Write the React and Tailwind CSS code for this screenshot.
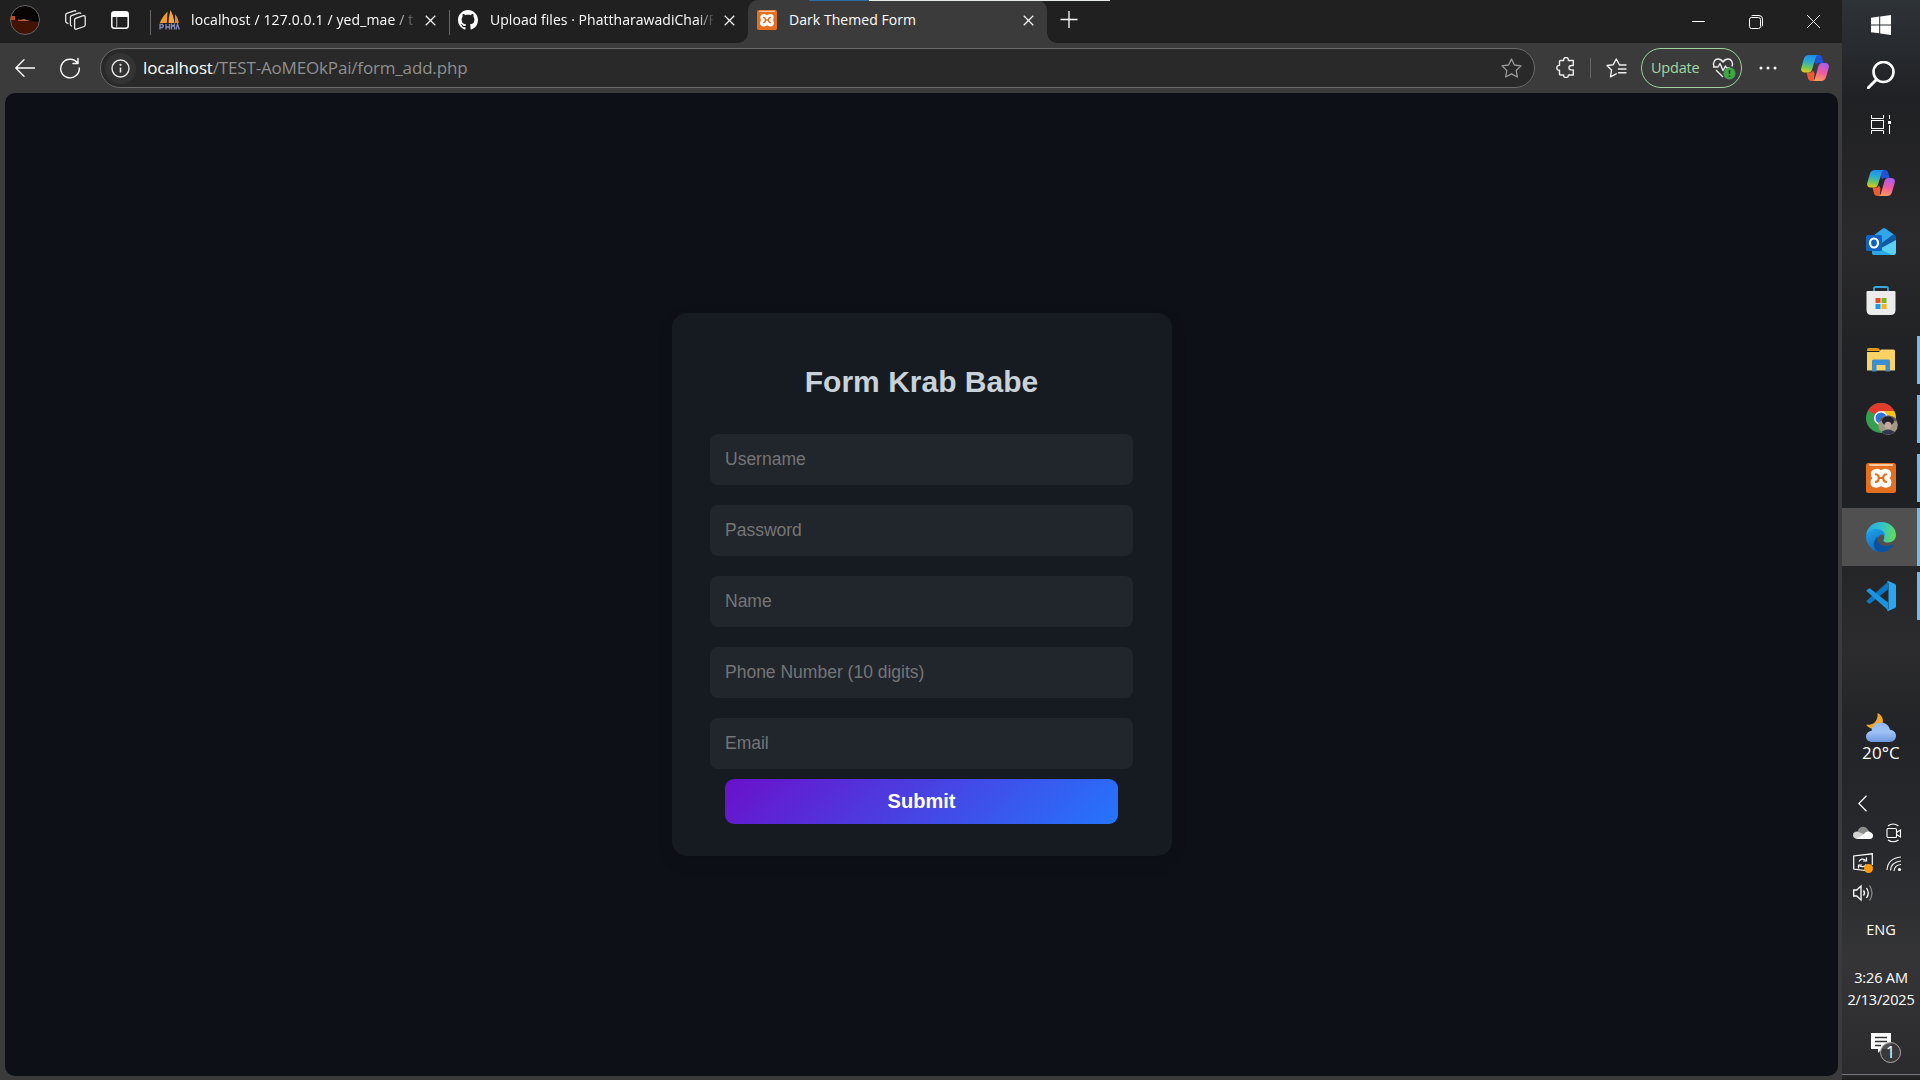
import React from "react";

const UI = "font-['Open_Sans',sans-serif]";

function Copilot({ id, className }) {
  return (
    <svg className={className} viewBox="0 0 28 26" fill="none">
      <defs>
        <linearGradient id={id + "a"} x1="8" y1="0" x2="5" y2="18" gradientUnits="userSpaceOnUse">
          <stop offset="0" stopColor="#1f8df0" />
          <stop offset=".4" stopColor="#2db0c8" />
          <stop offset=".72" stopColor="#7cc850" />
          <stop offset="1" stopColor="#f2c81c" />
        </linearGradient>
        <linearGradient id={id + "b"} x1="22" y1="8" x2="17" y2="26" gradientUnits="userSpaceOnUse">
          <stop offset="0" stopColor="#a95cf0" />
          <stop offset=".5" stopColor="#ee5aa0" />
          <stop offset="1" stopColor="#fb9a5c" />
        </linearGradient>
      </defs>
      <path d="M14 0h4.300c1.500 0 2.300 1 2.700 2.300L22.500 8h-4c-2 0-2.600.5-3.200 1.500L13.500 7z" fill="#2152d4" />
      <path d="M5.500 17.500H9c1.600 0 2.500-.8 3-2.300l1.500 3.300-.5 5.500 1 2h-3.500c-2 0-3-1-3.500-2.700z" fill="#ee5a34" />
      <path d="M8 0h9.500c-1.600 0-2.400 1.200-2.900 2.800L11.200 14c-.7 2.400-1.700 3.500-4 3.500H3.600C.8 17.500-.4 15.600.3 12.800L3 3.500C3.700 1.200 5.300 0 8 0z" fill={"url(#" + id + "a)"} />
      <path d="M20 26h-8.500c1.400 0 2-1.100 2.500-2.800L17.300 11.800c.7-2.300 1.700-3.800 4-3.800h3.100c2.800 0 4 2 3.300 4.700L25 22.300C24.300 24.700 22.700 26 20 26z" fill={"url(#" + id + "b)"} />
    </svg>
  );
}

function Xampp({ className }) {
  return (
    <svg className={className} viewBox="0 0 30 30" fill="none">
      <rect width="30" height="30" rx="2.500" fill="#e4701f" />
      <rect x="3" y="1" width="24" height="2" rx="1" fill="#f9c9a2" />
      <path d="M15 10.300C13.200 6.300 6.600 6.800 6.600 11c0 2 .8 3.200 1.800 4.300-1.100 1-2.100 2.200-2.100 4.200 0 4.500 6.900 4.500 8.700.6 1.800 3.900 8.700 3.900 8.700-.6 0-2-1-3.200-2.100-4.200 1-1.100 1.800-2.300 1.800-4.300 0-4.200-6.600-4.700-8.400-.7z" fill="#fff" stroke="#fff" strokeWidth="3.400" strokeLinejoin="round" />
      <path d="M9.800 11.300q3 .3 3 3.700 0 3.400-3 3.900M20.200 11.300q-3 .3-3 3.700 0 3.400 3 3.900M12.800 15h4.400" stroke="#e4701f" strokeWidth="2.100" strokeLinecap="round" />
    </svg>
  );
}

function Close({ className }) {
  return (
    <svg className={className} viewBox="0 0 12 12" stroke="#fff" strokeWidth="1.300" fill="none">
      <path d="M.8.8l10.400 10.400M11.200.8L.8 11.200" />
    </svg>
  );
}

function TabStrip() {
  return (
    <div className={"flex h-[43px] w-full bg-[#202020] text-white " + UI}>
      <svg className="ml-2.5 mt-[5px] h-[30px] w-[30px] shrink-0" viewBox="0 0 30 30">
        <defs>
          <clipPath id="avatar"><circle cx="15" cy="15" r="14.500" /></clipPath>
        </defs>
        <g clipPath="url(#avatar)">
          <rect width="30" height="30" fill="#080404" />
          <path d="M0 11h5v4l12 1 13 1v13H0z" fill="#421304" />
          <path d="M0 11h5v4H0zM8 14.500l12 1.500H8z" fill="#c44a10" />
          <path d="M9 15.500l5-1.500 6 2z" fill="#b07050" />
        </g>
        <circle cx="15" cy="15" r="14.500" fill="none" stroke="#666" />
      </svg>
      <svg className="ml-[25px] mt-2.5 h-[21px] w-[21px] shrink-0" viewBox="0 0 21 21" fill="none" stroke="#e8e8e8" strokeWidth="1.300">
        <path d="M10.500 8.300l7.800-2.600c1-.3 1.900.3 1.900 1.300v8c0 .8-.4 1.300-1.100 1.500l-7.700 2.700c-1 .3-1.800-.3-1.800-1.300v-8c0-.8.300-1.300.9-1.600z" />
        <path d="M6.800 16.200l-.7-.5c-.5-.3-.7-.7-.7-1.300V7.200c0-.8.400-1.300 1.100-1.600l7.700-2.700c.8-.2 1.400 0 1.800.8" />
        <path d="M3.300 13.800l-1.800-1.200c-.5-.3-.8-.8-.8-1.400V5c0-.8.400-1.300 1.100-1.600L9.300.8c.8-.2 1.400 0 1.800.7" />
      </svg>
      <svg className="ml-[25px] mt-[11px] h-[18px] w-[18px] shrink-0" viewBox="0 0 18 18" fill="none">
        <rect x=".8" y=".8" width="16.400" height="16.400" rx="2.500" stroke="#fff" strokeWidth="1.500" />
        <path d="M1 3q0-2 2-2h12q2 0 2 2v3H1z" fill="#fff" />
        <path d="M5.700 6v11" stroke="#aaa" strokeWidth="1.200" />
      </svg>
      <div className="ml-[21px] mt-2.5 h-[25px] w-px shrink-0 bg-[#686868]" />
      <div className="flex w-[299px] shrink-0">
        <svg className="ml-2 mt-2.5 h-[21px] w-[21px] shrink-0" viewBox="0 0 21 21" fill="none">
          <path d="M8.500 1.500Q2.500 8 .8 13h7z" fill="#f29a2e" />
          <path d="M11.500 0q-2 7-2 13h6q-.5-7-4-13z" fill="#f8a63a" />
          <path d="M16 4q0 5 0 9h4q-.5-5-4-9z" fill="#d58b3d" />
          <path d="M1 19.500V14.500h2.500q1.500 1.500 0 3H1M7 14v5.500M7 17h3.500M10.500 14v5.500M12.500 19.500v-5l1.500 2 1.500-2v5M17 19.500l1.500-5.500 1.800 5.500" stroke="#8486b8" strokeWidth="1.300" />
        </svg>
        <div className="ml-[11px] mt-2.5 h-5 w-[224px] whitespace-nowrap text-[14px] leading-5 tracking-[0.120px] [mask-image:linear-gradient(90deg,#000_90%,rgba(0,0,0,0.1)_100%)]">localhost / 127.0.0.1 / yed_mae / t</div>
        <Close className="ml-2.5 mt-[15px] h-[11px] w-[11px] shrink-0" />
      </div>
      <div className="-ml-px mt-2.5 h-[25px] w-px shrink-0 bg-[#686868]" />
      <div className="flex w-[298px] shrink-0">
        <svg className="ml-2 mt-2.5 h-5 w-5 shrink-0" viewBox="0 0 16 16" fill="#fff">
          <path d="M8 0C3.580 0 0 3.580 0 8c0 3.540 2.290 6.530 5.470 7.590.4.070.55-.17.55-.38 0-.19-.01-.82-.01-1.490-2.010.37-2.530-.49-2.690-.94-.09-.23-.48-.94-.82-1.130-.28-.15-.68-.52-.01-.53.63-.01 1.080.58 1.230.82.72 1.210 1.870.87 2.330.66.070-.52.28-.87.51-1.070-1.780-.2-3.640-.89-3.640-3.950 0-.87.31-1.590.82-2.150-.08-.2-.36-1.020.08-2.120 0 0 .67-.21 2.200.82.64-.18 1.320-.27 2-.27s1.360.09 2 .27c1.530-1.040 2.200-.82 2.200-.82.44 1.100.16 1.920.08 2.120.51.56.82 1.270.82 2.150 0 3.070-1.870 3.750-3.650 3.950.29.25.54.73.54 1.480 0 1.070-.01 1.930-.01 2.200 0 .21.15.46.55.38A8.010 8.010 0 0016 8c0-4.420-3.580-8-8-8z" />
        </svg>
        <div className="ml-3 mt-2.5 h-5 w-[223px] whitespace-nowrap text-[14px] leading-5 tracking-[0.040px] [mask-image:linear-gradient(90deg,#000_93%,rgba(0,0,0,0.1)_100%)]">Upload files · PhattharawadiChai/F</div>
        <Close className="ml-[11px] mt-[15px] h-[11px] w-[11px] shrink-0" />
      </div>
      <div className="relative flex w-[299px] shrink-0 rounded-t-[10px] bg-[#3b3b3b]">
        <div className="absolute -left-2.5 bottom-0 h-2.5 w-2.5 bg-[radial-gradient(circle_at_0_0,#202020_9.500px,#3b3b3b_10px)]" />
        <div className="absolute -right-2.5 bottom-0 h-2.5 w-2.5 bg-[radial-gradient(circle_at_100%_0,#202020_9.500px,#3b3b3b_10px)]" />
        <div className="absolute left-[61px] top-0 flex h-px w-[301px]">
          <div className="w-[60px] bg-[#2c6ba3]" />
          <div className="flex-1 bg-[#e6ebe8]" />
        </div>
        <Xampp className="ml-[9px] mt-2.5 h-5 w-5 shrink-0" />
        <div className="ml-3 mt-2.5 h-5 w-[223px] whitespace-nowrap text-[14px] leading-5 tracking-[0.060px]">Dark Themed Form</div>
        <Close className="ml-[11px] mt-[15px] h-[11px] w-[11px] shrink-0" />
      </div>
      <svg className="ml-[13px] mt-[11px] h-[18px] w-[18px] shrink-0" viewBox="0 0 18 18" stroke="#fff" strokeWidth="1.300">
        <path d="M.5 8.500h17M9 0v17" />
      </svg>
      <div className="ml-auto flex">
        <svg className="mr-11 mt-[15px] h-[13px] w-[13px]" viewBox="0 0 13 13" stroke="#fff"><path d="M0 6.500h13" /></svg>
        <svg className="mr-[44px] mt-[15px] h-[14px] w-[14px]" viewBox="0 0 14 14" fill="none" stroke="#fff">
          <rect x=".5" y="2.500" width="11" height="11" rx="2" />
          <path d="M2.500.9Q3 .5 4 .5h6q3.500 0 3.500 3.500v6q0 1-.6 1.500" />
        </svg>
        <svg className="mr-[22px] mt-[15px] h-[13px] w-[13px]" viewBox="0 0 13 13" stroke="#fff"><path d="M0 0l13 13M13 0L0 13" /></svg>
      </div>
    </div>
  );
}

function Toolbar() {
  return (
    <div className={"flex h-[50px] w-full bg-[#3b3b3b] " + UI}>
      <svg className="ml-[15px] mt-4 h-[18px] w-5 shrink-0" viewBox="0 0 20 18" fill="none" stroke="#fff" strokeWidth="1.300" strokeLinecap="round" strokeLinejoin="round">
        <path d="M9 .7L.8 9 9 17.300M1 9h18.500" />
      </svg>
      <svg className="ml-6 mt-[14px] h-[22px] w-[22px] shrink-0" viewBox="0 0 22 22" fill="none" stroke="#fff" strokeWidth="1.400" strokeLinecap="round" strokeLinejoin="round">
        <path d="M18.500 6A9.300 9.300 0 1 0 20.300 11M19 1.500v5h-5" />
      </svg>
      <div className="ml-[19px] mt-[5px] flex h-10 w-[1435px] shrink-0 items-center rounded-full border border-[#6b6b6b] bg-[#292929]">
        <div className="ml-1 flex h-[31px] w-[31px] items-center justify-center rounded-full bg-[#333]">
          <svg className="h-[19px] w-[19px]" viewBox="0 0 19 19" fill="none" stroke="#e8e8e8" strokeWidth="1.400">
            <circle cx="9.500" cy="9.500" r="8.500" />
            <path d="M9.500 8.500v5" strokeWidth="1.600" />
            <circle cx="9.500" cy="5.800" r=".5" strokeWidth="1.200" />
          </svg>
        </div>
        <div className="ml-[7px] whitespace-nowrap text-[17px] leading-[22px] tracking-[-0.165px] text-[#8f8f8f]"><span className="text-white">localhost</span>/TEST-AoMEOkPai/form_add.php</div>
        <svg className="ml-auto mr-3 h-[21px] w-[21px]" viewBox="0 0 21 21" fill="none" stroke="#9a9a9a" strokeWidth="1.300" strokeLinejoin="round">
          <path d="M10.500 1l2.900 6 6.600.9-4.800 4.600 1.200 6.500-5.900-3.100L4.600 19l1.200-6.500L1 7.900 7.600 7z" />
        </svg>
      </div>
      <svg className="ml-[21px] mt-[14px] h-[21px] w-[20px] shrink-0" viewBox="0 0 20 21" fill="none" stroke="#eee" strokeWidth="1.400" strokeLinejoin="round">
        <path d="M4.500 3.500h3.200c-.3-2 .8-3 2.300-3s2.600 1 2.300 3h5v5h-1.800c-1.800 0-2.500 1-2.500 2.200s.8 2.200 2.500 2.200h1.800V18h-5c.3 1.700-.8 2.500-2.300 2.500S7.400 19.700 7.700 18H4.500q-1 0-1-1v-3.800C1.800 13.400.8 12.300.8 10.800s1-2.600 2.700-2.400V4.500q0-1 1-1z" />
      </svg>
      <div className="ml-[14px] mt-[15px] h-5 w-px shrink-0 bg-[#666]" />
      <svg className="ml-[15px] mt-[15px] h-5 w-[21px] shrink-0" viewBox="0 0 21 20" fill="none" stroke="#eee" strokeWidth="1.400" strokeLinejoin="round" strokeLinecap="round">
        <path d="M20 7h-6.500L10.300 1 7.200 6.700 1 7.500l4.500 4.600-1 6.700 5.700-3M12.500 11H20M12.500 14.800H20" />
      </svg>
      <div className="ml-[14px] mt-[5px] flex h-10 w-[101px] shrink-0 items-center rounded-full border border-[#9cd49c] text-[#a3d9a1]">
        <span className="ml-[9px] w-[51px] whitespace-nowrap text-[14.500px] tracking-[-0.200px]">Update</span>
        <svg className="ml-[10px] mt-0.5 h-[22px] w-[24px]" viewBox="0 0 24 22" fill="none">
          <path d="M2 8.500C.5 4 3 1 6 1c2 0 3.600 1 5 3 1.400-2 3-3 5-3 3 0 5.500 3 4 7.500M4 12l7 7M1 9h5l2-3.500 3 7L13.500 8l1 2H18" stroke="#eee" strokeWidth="1.400" strokeLinejoin="round" />
          <circle cx="17.500" cy="15.500" r="6" fill="#3fa648" />
          <path d="M17.500 12v4M17.500 17.500v1.500" stroke="#173d1a" strokeWidth="1.500" />
        </svg>
      </div>
      <svg className="ml-[17px] mt-[23px] h-1 w-[18px] shrink-0" viewBox="0 0 18 4" fill="#fff">
        <circle cx="2" cy="2" r="1.500" /><circle cx="9" cy="2" r="1.500" /><circle cx="16" cy="2" r="1.500" />
      </svg>
      <Copilot id="cpA" className="ml-6 mt-3 h-[26px] w-7 shrink-0" />
    </div>
  );
}

const FIELDS = ["Username", "Password", "Name", "Phone Number (10 digits)", "Email"];

function FormCard() {
  return (
    <form className="flex h-[543px] w-[500px] flex-col rounded-[15px] bg-[#161b22] px-[38px] font-['Liberation_Sans',Arial,sans-serif] shadow-[0_6px_16px_rgba(0,0,0,0.12)]">
      <h2 className="mt-[50.500px] text-center text-[30px] font-bold leading-[36px] text-[#c9d1d9]">Form Krab Babe</h2>
      <div className="mt-[34.500px] flex flex-col gap-5">
        {FIELDS.map((f) => (
          <input key={f} placeholder={f} className="h-[51px] w-[423px] rounded-lg bg-[#21262d] px-[15.500px] text-[17.500px] text-white placeholder:text-[#757575]" />
        ))}
      </div>
      <button type="button" className="ml-[15px] mt-2.5 h-[45px] w-[393px] rounded-[9px] bg-[linear-gradient(135deg,#6a11cb,#2575fc)] pb-0.5 pl-px text-[20px] font-bold leading-none text-white">Submit</button>
    </form>
  );
}

function Slot({ children, running, active }) {
  return (
    <div className={"flex w-full shrink-0 items-center " + (active ? "mt-px h-[58px] bg-[#505051]" : "h-[59px]")}>
      <div className="flex w-[75px] justify-center pl-[3px]">{children}</div>
      {running && <div className={"w-[3px] bg-[#76b9ed] " + (active ? "h-[58px]" : "h-12")} />}
    </div>
  );
}

function Taskbar() {
  return (
    <div className={"flex h-[1080px] w-[78px] shrink-0 flex-col bg-[linear-gradient(180deg,#2e3338_0px,#202124_100px,#242426_160px,#2a2a2c_240px,#202124_360px,#1f2023_500px,#2c2c2e_650px,#232427_730px,#27292c_850px,#353537_960px,#2b2b2d_1074px,#1f1f20_1080px)] text-white " + UI}>
      <svg className="ml-[29px] mt-[15px] h-5 w-5 shrink-0" viewBox="0 0 20 20" fill="#fff">
        <path d="M0 2.700L8.200 1.600V9.400H0zM9.200 1.400L20 0v9.400H9.200zM0 10.400h8.200v7.900L0 17.200zM9.200 10.400H20V20L9.200 18.500z" />
      </svg>
      <svg className="ml-[25px] mt-[26px] h-7 w-7 shrink-0" viewBox="0 0 28 28" fill="none" stroke="#fff">
        <circle cx="16.500" cy="11" r="10" strokeWidth="2.600" />
        <path d="M9.500 18.500L1.300 26.700" strokeWidth="3" strokeLinecap="round" />
      </svg>
      <svg className="ml-[29px] mt-[26px] h-[19px] w-5 shrink-0" viewBox="0 0 20 19" fill="none" stroke="#fff">
        <path d="M.5 0v3.500h12V0M.5 19v-3.500h12V19M18.500 0v4M18.500 10v9" />
        <rect x=".5" y="5.500" width="12" height="8" />
        <rect x="17" y="6" width="3" height="3" fill="#fff" stroke="none" />
      </svg>
      <div className="mt-[19px] flex flex-col">
        <Slot><Copilot id="cpB" className="h-[26px] w-7" /></Slot>
        <Slot>
          <svg className="h-[28px] w-[30px]" viewBox="0 0 30 28" fill="none">
            <path d="M6 9L16.500.8q1.500-1 3 0L28.500 7q1.500 1 1.500 2.500V24q0 3-3 3H9q-3 0-3-3z" fill="#1479c9" />
            <path d="M6 9L16.500.8q1.500-1 3 0L28 6.700 12 18H6z" fill="#2fa5ec" />
            <path d="M14 16.500L27.500 6.300Q30 8 30 10v4L14 23z" fill="#0c59a4" />
            <path d="M30 12v12q0 3-3 3H9q-2.500 0-3-2z" fill="#5ccff5" />
            <path d="M6 17l20 10H9q-3 0-3-3z" fill="#2aa7e6" />
            <rect y="7" width="16" height="16" rx="1.500" fill="#0f62bd" />
            <ellipse cx="8" cy="15" rx="4" ry="4.500" stroke="#fff" strokeWidth="2.200" />
          </svg>
        </Slot>
        <Slot>
          <svg className="mt-px h-[30px] w-[30px]" viewBox="0 0 30 30" fill="none">
            <path d="M8 6V2.500Q8 1 9.500 1h11Q22 1 22 2.500V6" stroke="#36a9de" strokeWidth="1.800" />
            <path d="M.5 6q0-1 1-1h27q1 0 1 1v18q0 5-5 5h-19q-5 0-5-5z" fill="#ececec" />
            <path d="M9.500 12h5v5h-5z" fill="#e34f24" /><path d="M15.500 12h5v5h-5z" fill="#7ab51d" />
            <path d="M9.500 18h5v5h-5z" fill="#1a9be0" /><path d="M15.500 18h5v5h-5z" fill="#f9b515" />
          </svg>
        </Slot>
        <Slot running>
          <svg className="h-6 w-7" viewBox="0 0 28 24" fill="none">
            <path d="M0 2Q0 0 1.500 0h9q1 0 1.600.8L13.500 3H0z" fill="#dd9a10" />
            <path d="M0 4h12l2-2.500h12.500Q28 1.500 28 3v19.500H0z" fill="#fbd264" />
            <path d="M5 23.500V13q0-1.500 1.500-1.500h15q1.500 0 1.500 1.500v10.500h-4.500V17h-9v6.500z" fill="#3c8dd0" />
          </svg>
        </Slot>
        <Slot running>
          <svg className="-mr-0.5 mt-px h-8 w-8" viewBox="0 0 32 32" fill="none">
            <circle cx="15" cy="15" r="15" fill="#34a04f" />
            <path d="M15 15L2 7.500A15 15 0 0 1 28 7.500z" fill="#e33b2e" />
            <path d="M15 8H28.300A15 15 0 0 1 15 30l6.500-11.500z" fill="#fbc21a" />
            <circle cx="15" cy="15" r="7" fill="#fff" />
            <circle cx="15" cy="15" r="5.500" fill="#2e73e0" />
            <circle cx="22" cy="22" r="9.800" fill="#a09a84" />
            <path d="M12.500 19q9-4 19 0l-2-4q-7-5-14.500 0z" fill="#5d5b56" />
            <ellipse cx="22" cy="18" rx="6" ry="4.500" fill="#23222c" />
            <ellipse cx="22" cy="22.500" rx="3.500" ry="3.800" fill="#c1aa9b" />
            <path d="M15 29q7-5 14 0-7 5-14 0z" fill="#34374d" />
          </svg>
        </Slot>
        <Slot running><Xampp className="h-[30px] w-[30px]" /></Slot>
        <Slot running active>
          <svg className="h-[30px] w-[30px]" viewBox="0 0 30 30" fill="none">
            <defs>
              <linearGradient id="edgeTop" x1="2" y1="8" x2="30" y2="14" gradientUnits="userSpaceOnUse">
                <stop offset="0" stopColor="#2aa8e4" /><stop offset=".5" stopColor="#35c7c4" /><stop offset="1" stopColor="#66dc50" />
              </linearGradient>
              <linearGradient id="edgeLeft" x1="4" y1="10" x2="14" y2="30" gradientUnits="userSpaceOnUse">
                <stop offset="0" stopColor="#1a9be6" /><stop offset="1" stopColor="#1165b4" />
              </linearGradient>
            </defs>
            <path d="M0 14C.5 6 6.500 0 15 0c9 0 15 6 15 13 0 4.500-3.500 7.500-7.800 7.500-3 0-5.200-1.200-4.700-2.600C20 15 17 9.500 10.500 9.500 5 9.500 1 11.500 0 14z" fill="url(#edgeTop)" />
            <path d="M0 14.500C1.500 9.500 6 7 10.500 7c5.500 0 8.500 3.500 8.500 7-3-3-8 0-8 5 0 5.500 4.500 10 9 10C9 33 0 24 0 14.500z" fill="url(#edgeLeft)" />
            <path d="M12 14.500c-2.500 6 3 12.500 16 8-2 4-7 7.500-13 7.500-5 0-8-5-7-9.500.5-2.500 2-4.800 4-6z" fill="#0c519e" />
          </svg>
        </Slot>
        <Slot running>
          <svg className="h-[30px] w-[30px]" viewBox="0 0 30 30" fill="none">
            <path d="M1 19.500L22 .8V8.500L4.500 22.300q-1 .8-2 0L.8 21q-.8-.8.200-1.500z" fill="#0b77c2" />
            <path d="M1 10.500L22 29.200V21.500L4.500 7.700q-1-.8-2 0L.8 9q-.8.800.2 1.500z" fill="#1b93df" />
            <path d="M21 0.500q.8-.7 1.800-.3L29 3q1 .5 1 1.800v20.400q0 1.300-1 1.800l-6.200 2.800q-1 .4-1.800-.3l1.500-2V2.500z" fill="#2aa5ef" />
          </svg>
        </Slot>
      </div>
      <svg className="ml-6 mt-[88px] h-[30px] w-[30px] shrink-0" viewBox="0 0 30 30" fill="none">
        <defs>
          <linearGradient id="cloud" x1="0" y1="9" x2="0" y2="29" gradientUnits="userSpaceOnUse"><stop stopColor="#8fb8f0" /><stop offset=".5" stopColor="#9fc2f5" /><stop offset="1" stopColor="#6d97e0" /></linearGradient>
        </defs>
        <path d="M11.500 0c5.500 2.500 7.500 9 3 13.500-4 4-11.500 3-14.500-2 7 1.500 12.500-3.500 11.500-11.500z" fill="#f3a62b" />
        <path d="M6.500 29C2.500 29 0 26.500 0 23.500 0 20.500 2.500 18 5.500 18 6 13 10 9.500 14.800 9.500c4.700 0 8.200 3 9.200 7.300 3.500.2 6 2.800 6 6 0 3.500-2.700 6.200-6.500 6.200z" fill="url(#cloud)" />
      </svg>
      <div className="text-center text-[17px] leading-[20px] tracking-[0.100px]">20°C</div>
      <svg className="ml-4 mt-[32px] h-[17px] w-[10px] shrink-0" viewBox="0 0 10 17" fill="none" stroke="#fff" strokeWidth="1.300"><path d="M8.500.8L.8 8.500l7.700 7.700" /></svg>
      <div className="ml-[11px] mt-[11px] grid w-[50px] grid-cols-[20px_16px] gap-x-[13px] gap-y-[10px]">
        <svg className="h-5 w-5" viewBox="0 0 20 20">
          <path d="M4 16C0 16 0 9.500 4.500 9 5.500 3 12.500 2 15 7l5 5q0 4-4 4z" fill="#8c8c8c" />
          <path d="M4 15.500Q0 15.500 0 12T4.500 8.500l7 3-6 4z" fill="#d2d2d2" />
          <path d="M3 15.500q5-1.500 8.500-5 1.500-2.500 4-2 4.500 1 4.500 4 0 3.500-4 3.500H4z" fill="#fff" />
        </svg>
        <svg className="h-5 w-4" viewBox="0 0 16 20" fill="none" stroke="#fff" strokeWidth="1.100">
          <rect x="1" y="5.500" width="9.500" height="9" rx="1" /><path d="M10.500 9.500l4-2.500v7l-4-2.500M2 3q5-4 10.500 0M2 17q5 3.500 10.500 0" />
        </svg>
        <svg className="h-5 w-5" viewBox="0 0 20 20" fill="none" stroke="#fff" strokeWidth="1.200">
          <path d="M12 17.500L.7 16V3L19.300.8V12" />
          <path d="M6 8.500Q8 4.500 12.500 7M13.500 4.500V8h-3.500M13 11.500q-2 3.500-6.500 1.500M5.500 15.500V12H9" />
          <circle cx="15.500" cy="15.500" r="4.500" fill="#ff9a0b" stroke="none" />
        </svg>
        <svg className="h-5 w-4" viewBox="0 0 16 20" fill="none" stroke="#eee" strokeWidth="1.200">
          <path d="M1 17Q2 5 15 4M4.500 17.500Q5 9 15 8M8 18q.5-6 7-6.500" /><circle cx="13.500" cy="16.500" r="1.600" fill="#fff" stroke="none" />
        </svg>
        <svg className="h-5 w-5" viewBox="0 0 20 20" fill="none" stroke="#fff" strokeWidth="1.300">
          <path d="M.7 7h3L8 3v14l-4.300-4h-3zM10.500 7.500q2 2.500 0 5M13.500 5q3.500 5 0 10" /><path d="M16.500 2.500q5 7.500 0 15" stroke="#888" />
        </svg>
      </div>
      <div className="mt-[17px] text-center text-[14.500px] leading-5">ENG</div>
      <div className="mt-[27px] whitespace-nowrap text-center text-[14.500px] leading-[22px] tracking-[-0.160px]">3:26 AM<br />2/13/2025</div>
      <svg className="ml-[29px] mt-[22px] h-[30px] w-[31px] shrink-0" viewBox="0 0 31 30" fill="none">
        <path d="M0 0h20v16h-9l-4 4v-4H0z" fill="#fff" />
        <path d="M4 4.500h12M4 8.500h12M4 12.500h6" stroke="#333" strokeWidth="1.300" />
        <circle cx="19.500" cy="19.500" r="10" fill="#3a3a3c" fillOpacity=".88" stroke="#aaa" />
        <text x="19.500" y="25" fill="#fff" fontSize="16" textAnchor="middle" fontFamily="Open Sans">1</text>
      </svg>
      <div className="mb-[5px] mt-auto h-px w-full shrink-0 bg-[#77777a]" />
    </div>
  );
}

export default function App() {
  return (
    <div className="flex h-[1080px] w-[1920px] overflow-hidden bg-[#3b3b3b]">
      <div className="flex w-[1842px] shrink-0 flex-col">
        <TabStrip />
        <Toolbar />
        <main className="ml-[5px] flex h-[983px] w-[1833px] items-center justify-center rounded-[10px] bg-[#0d1117]">
          <FormCard />
        </main>
      </div>
      <Taskbar />
    </div>
  );
}
